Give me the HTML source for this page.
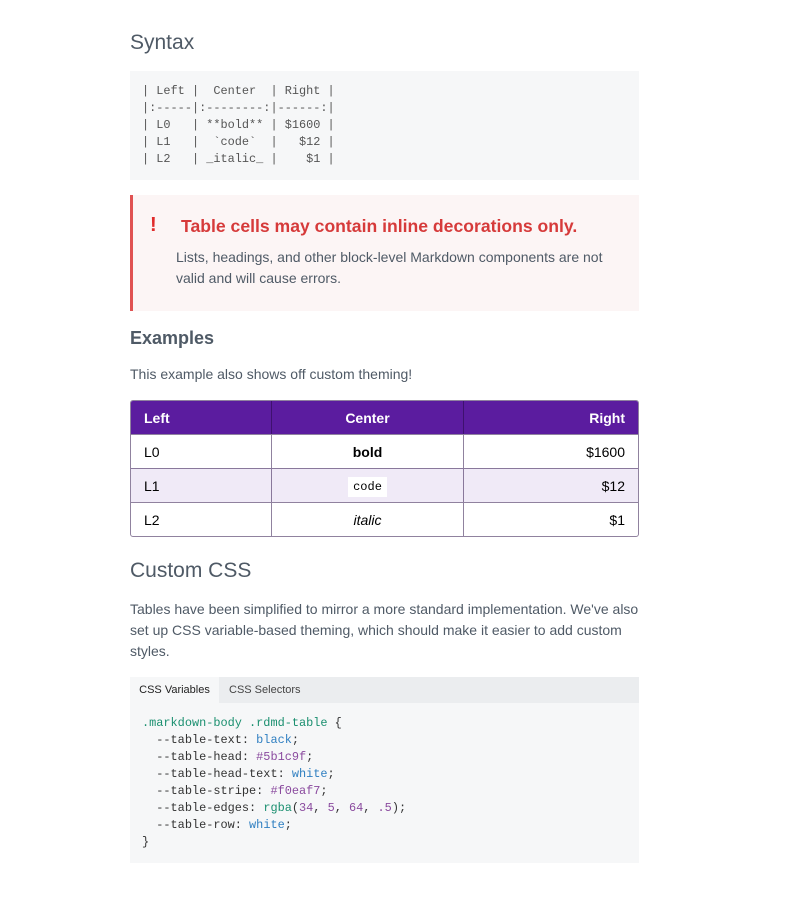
<!DOCTYPE html>
<html><head><style>
*{margin:0;padding:0;box-sizing:border-box}
body{width:800px;height:923px;background:#fff;font-family:"Liberation Sans",sans-serif;color:#4f5a66;position:relative}
.a{position:absolute;left:130px;width:509px}
h2{font-weight:400;font-size:21px;color:#4f5a66}
pre{font-family:"Liberation Mono",monospace;font-size:11.9px;line-height:17px;color:#333}
.code{background:#f6f7f8;padding:12px 12px}
p{font-size:14px;line-height:21px}
table{border-collapse:separate;border-spacing:0;width:509px;font-size:14px;color:#000;border:1px solid rgba(34,5,64,.5);border-radius:3px;overflow:hidden}
th{background:#5b1c9f;color:#fff;font-weight:bold;height:34px;padding:0 13px;border-right:1px solid rgba(34,5,64,.5)}
td{height:34px;padding:0 13px;border-top:1px solid rgba(34,5,64,.5);border-right:1px solid rgba(34,5,64,.5)}
th:last-child,td:last-child{border-right:none}
tr.s td{background:#f0eaf7}
.g{color:#1a8f6f}.b{color:#2f7fc1}.p{color:#8a4a9e}
</style></head><body>
<h2 class="a" style="top:31px">Syntax</h2>
<pre class="a code" style="top:71px;height:109px;color:#555">| Left |  Center  | Right |
|:-----|:--------:|------:|
| L0   | **bold** | $1600 |
| L1   |  `code`  |   $12 |
| L2   | _italic_ |    $1 |</pre>
<div class="a" style="top:195px;height:116px;background:#fcf5f5;border-left:3px solid #e05252">
<div style="position:absolute;left:17px;top:19px;color:#e02b2b;font-weight:bold;font-size:20px">!</div>
<div style="position:absolute;left:48px;top:21px;color:#d63a3a;font-weight:bold;font-size:17.6px">Table cells may contain inline decorations only.</div>
<p style="position:absolute;left:43px;top:52px;width:440px">Lists, headings, and other block-level Markdown components are not valid and will cause errors.</p>
</div>
<div class="a" style="top:328px;font-size:18px;font-weight:bold">Examples</div>
<p class="a" style="top:364px">This example also shows off custom theming!</p>
<table class="a" style="top:400px">
<tr><th style="text-align:left;width:141px;height:33px">Left</th><th style="width:192px;height:33px">Center</th><th style="text-align:right;height:33px">Right</th></tr>
<tr><td>L0</td><td style="text-align:center;font-weight:bold">bold</td><td style="text-align:right">$1600</td></tr>
<tr class="s"><td>L1</td><td style="text-align:center"><span style="font-family:'Liberation Mono',monospace;font-size:12px;background:#fff;padding:3px 5px">code</span></td><td style="text-align:right">$12</td></tr>
<tr><td>L2</td><td style="text-align:center;font-style:italic">italic</td><td style="text-align:right">$1</td></tr>
</table>
<h2 class="a" style="top:559px">Custom CSS</h2>
<p class="a" style="top:599px">Tables have been simplified to mirror a more standard implementation. We've also set up CSS variable-based theming, which should make it easier to add custom styles.</p>
<div class="a" style="top:677px;height:26px;background:#ebedef;font-size:11px">
<span style="position:absolute;left:0;top:0;height:26px;width:89px;background:#f6f7f8;color:#222;line-height:26px;text-align:center">CSS Variables</span>
<span style="position:absolute;left:99px;line-height:26px;color:#444">CSS Selectors</span></div>
<pre class="a code" style="top:703px;height:160px;padding-top:12px"><span class="g">.markdown-body .rdmd-table</span> {
  --table-text: <span class="b">black</span>;
  --table-head: <span class="p">#5b1c9f</span>;
  --table-head-text: <span class="b">white</span>;
  --table-stripe: <span class="p">#f0eaf7</span>;
  --table-edges: <span class="g">rgba</span>(<span class="p">34</span>, <span class="p">5</span>, <span class="p">64</span>, <span class="p">.5</span>);
  --table-row: <span class="b">white</span>;
}</pre>
</body></html>
